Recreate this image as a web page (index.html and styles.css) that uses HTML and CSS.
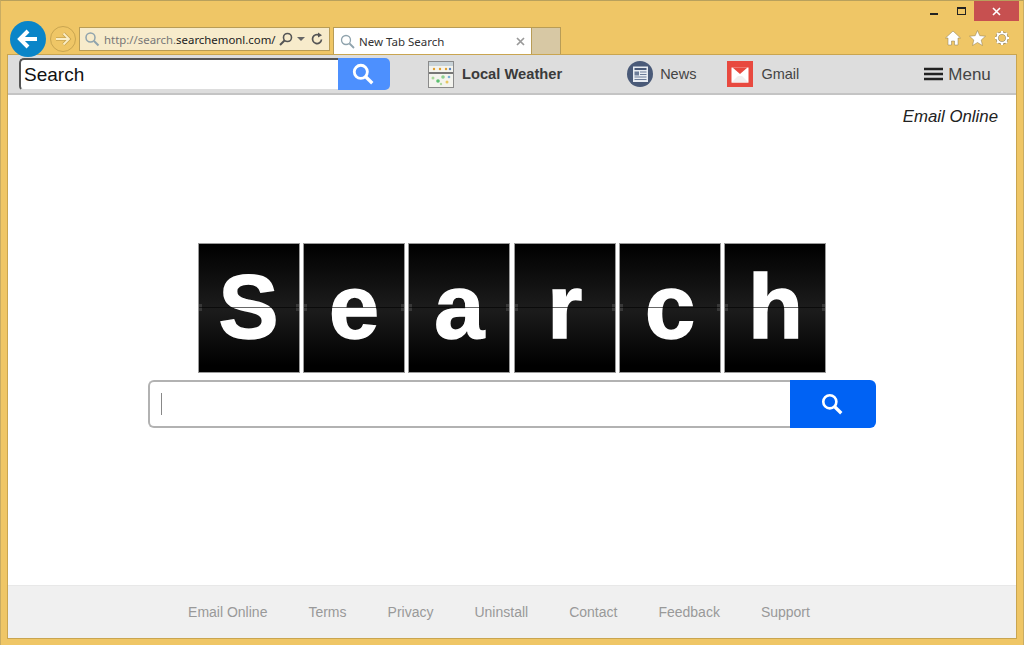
FILE: index.html
```html
<!DOCTYPE html>
<html lang="en">
<head>
  <meta charset="UTF-8">
  <meta name="viewport" content="width=device-width, initial-scale=1.0">
  <title>New Tab Search</title>
  <link rel="stylesheet" href="styles.css">
</head>
<body>
  <div class="window">
    <!-- Browser chrome -->
    <header class="chrome">
      <div class="back-btn">
        <svg width="24" height="24" viewBox="0 0 24 24"><path d="M21 12H4M12 4l-8 8 8 8" fill="none" stroke="#fff" stroke-width="4"/></svg>
      </div>
      <div class="forward-btn">
        <svg width="18" height="18" viewBox="0 0 18 18"><path d="M2 9h13M9.500 3.500L15 9l-5.500 5.500" fill="none" stroke="#c9a550" stroke-width="3.400"/><path d="M2 9h13M9.500 3.500L15 9l-5.500 5.500" fill="none" stroke="#fbeec6" stroke-width="1.800"/></svg>
      </div>
      <div class="address-bar">
        <svg width="16" height="16" viewBox="0 0 16 16"><circle cx="6.500" cy="6.500" r="4.500" fill="none" stroke="#8fa3ad" stroke-width="1.500"/><path d="M10 10l4.500 4.500" stroke="#8fa3ad" stroke-width="2"/></svg>
        <span class="url"><span class="url-dim">http://search.</span>searchemonl.com/</span>
        <svg width="14" height="14" viewBox="0 0 14 14"><circle cx="8.500" cy="5.500" r="4" fill="none" stroke="#555" stroke-width="1.600"/><path d="M5.500 8.500L1 13" stroke="#555" stroke-width="2"/></svg>
        <span class="caret"></span>
        <svg width="14" height="14" viewBox="0 0 14 14"><path d="M11.500 7.500A4.500 4.500 0 1 1 9.500 3.300" fill="none" stroke="#555" stroke-width="1.700"/><path d="M8 0.500l4 2.800-4 2.200z" fill="#555"/></svg>
      </div>
      <div class="tab">
        <svg width="15" height="15" viewBox="0 0 15 15"><circle cx="6" cy="6" r="4.500" fill="none" stroke="#8fa3ad" stroke-width="1.300"/><path d="M9.500 9.500l4.500 4.500" stroke="#8fa3ad" stroke-width="1.800"/></svg>
        <span class="tab-title">New Tab Search</span>
        <svg class="tab-close" width="9" height="9" viewBox="0 0 9 9"><path d="M1 1l7 7M8 1l-7 7" stroke="#999" stroke-width="1.700"/></svg>
      </div>
      <div class="new-tab"></div>

      <div class="chrome-right">
        <div class="caption">
          <span class="cap-min"></span>
          <span class="cap-max"></span>
          <span class="cap-close">
            <svg width="9" height="9" viewBox="0 0 9 9"><path d="M1 1l7 7M8 1l-7 7" stroke="#fff" stroke-width="1.600"/></svg>
          </span>
        </div>
        <div class="tools">
          <svg width="16" height="16" viewBox="0 0 16 16"><path d="M8 1L0.500 8H3v7h3.500v-4h3v4H13V8h2.500z" fill="#fff" stroke="#8a7a50" stroke-width="0.500"/></svg>
          <svg width="17" height="16" viewBox="0 0 17 16"><path d="M8.500 0.500l2.300 5.200 5.700 0.500-4.300 3.800 1.300 5.500-5-3-5 3 1.300-5.500L0.500 6.200l5.700-0.500z" fill="#fff" stroke="#8a7a50" stroke-width="0.500"/></svg>
          <svg width="16" height="16" viewBox="0 0 16 16"><circle cx="8" cy="8" r="4.800" fill="none" stroke="#8a7a50" stroke-width="3"/><path d="M8 1v2.500M8 12.500V15M1 8h2.500M12.500 8H15M3 3l1.800 1.800M11.200 11.200L13 13M13 3l-1.800 1.800M4.800 11.200L3 13" stroke="#8a7a50" stroke-width="2.600"/><circle cx="8" cy="8" r="4.800" fill="none" stroke="#fff" stroke-width="2"/><path d="M8 1v2.500M8 12.500V15M1 8h2.500M12.500 8H15M3 3l1.800 1.800M11.200 11.200L13 13M13 3l-1.800 1.800M4.800 11.200L3 13" stroke="#fff" stroke-width="2"/></svg>
        </div>
      </div>
    </header>

    <div class="viewport">
      <!-- Toolbar -->
      <nav class="toolbar">
        <form class="bar-search">
          <div class="bar-input">Search</div>
          <div class="bar-btn">
            <svg width="24" height="24" viewBox="0 0 22 22"><circle cx="9" cy="9" r="6" fill="none" stroke="#fff" stroke-width="2.600"/><path d="M13.500 13.500l6 6" stroke="#fff" stroke-width="3"/></svg>
          </div>
        </form>

        <a class="bar-link weather">
          <svg width="26" height="27" viewBox="0 0 26 27">
            <rect x="0.500" y="0.500" width="25" height="26" fill="#f4f4ee" stroke="#8a8a8a"/>
            <rect x="1" y="1" width="24" height="4" fill="#c9d3d8"/>
            <rect x="1" y="11" width="24" height="2" fill="#777"/>
            <circle cx="6" cy="8" r="1.200" fill="#e0a030"/><circle cx="12" cy="8" r="1.200" fill="#e0a030"/><circle cx="18" cy="8" r="1.200" fill="#e0a030"/><circle cx="22" cy="8" r="1.200" fill="#5a86c0"/>
            <circle cx="5" cy="17" r="1.500" fill="#a8d898"/><circle cx="10" cy="20" r="1.800" fill="#5cc070"/><circle cx="15" cy="16" r="1.800" fill="#8cd090"/><circle cx="19" cy="21" r="1.500" fill="#e8c860"/><circle cx="21" cy="16" r="1.300" fill="#7ab0d8"/><circle cx="13" cy="23" r="1.200" fill="#b0d8a0"/>
          </svg>
          <span>Local Weather</span>
        </a>
        <a class="bar-link news">
          <svg width="26" height="26" viewBox="0 0 26 26">
            <circle cx="13" cy="13" r="13" fill="#4a5a78"/>
            <rect x="6" y="5.500" width="15" height="15.500" fill="#e8ecf2"/>
            <rect x="7.500" y="7" width="12" height="2" fill="#4a5a78"/>
            <rect x="7.500" y="10.500" width="4.500" height="4" fill="#6c7c98"/>
            <path d="M13 11h6.500M13 13.500h6.500M7.500 16h12M7.500 18.500h12" stroke="#6c7c98"/>
          </svg>
          <span>News</span>
        </a>
        <a class="bar-link gmail">
          <svg width="26" height="26" viewBox="0 0 26 26">
            <rect width="26" height="26" fill="#e8493f"/>
            <rect x="4.500" y="6.500" width="17" height="15" fill="#fff"/>
            <path d="M5.500 6.500h15L13 13z" fill="#e8493f"/>
            <path d="M4.500 21.500l6.500-6.500h4l6.500 6.500z" fill="#f2eeee"/>
          </svg>
          <span>Gmail</span>
        </a>
        <a class="bar-link menu">
          <svg width="19" height="14" viewBox="0 0 19 14"><path d="M0 2h19M0 7h19M0 12h19" stroke="#222" stroke-width="2.400"/></svg>
          <span>Menu</span>
        </a>
      </nav>

      <main class="main">
        <div class="top-link">Email Online</div>

        <div class="logo">
          <div class="tile">S</div>
          <div class="tile">e</div>
          <div class="tile">a</div>
          <div class="tile">r</div>
          <div class="tile">c</div>
          <div class="tile">h</div>
        </div>

        <form class="search">
          <div class="search-input"><span class="cursor"></span></div>
          <div class="search-btn">
            <svg width="24" height="24" viewBox="0 0 22 22"><circle cx="9" cy="9" r="6" fill="none" stroke="#fff" stroke-width="2.400"/><path d="M13.500 13.500l6 6" stroke="#fff" stroke-width="3"/></svg>
          </div>
        </form>
      </main>

      <footer class="footer">
        <a>Email Online</a>
        <a>Terms</a>
        <a>Privacy</a>
        <a>Uninstall</a>
        <a>Contact</a>
        <a>Feedback</a>
        <a>Support</a>
      </footer>
    </div>
  </div>
</body>
</html>
```

FILE: styles.css
```css
/* General Styling */
html, body {
  margin: 0;
  height: 100%;
}

body {
  font-family: "Liberation Sans", Arial, sans-serif;
  overflow: hidden;
}

.window {
  width: 1024px;
  height: 645px;
  box-sizing: border-box;
  display: flex;
  flex-direction: column;
  background: #efc666;
  border: 1px solid #c9ac62;
  border-top-color: #b8a05c;
  border-bottom: none;
}

/* Browser chrome */
.chrome {
  height: 53px;
  flex: none;
  display: flex;
  align-items: flex-start;
  padding: 20px 4px 0 9px;
  box-sizing: border-box;
  position: relative;
  z-index: 1;
}

.back-btn {
  width: 36px;
  height: 36px;
  border-radius: 50%;
  background: #0a85c8;
  display: flex;
  justify-content: center;
  align-items: center;
  flex: none;
}

.forward-btn {
  width: 24px;
  height: 24px;
  margin: 5px 0 0 4px;
  border: 1px solid #c9a550;
  border-radius: 50%;
  display: flex;
  justify-content: center;
  align-items: center;
  flex: none;
}

.address-bar {
  width: 251px;
  height: 24px;
  margin: 6px 0 0 3px;
  box-sizing: border-box;
  border: 1px solid #b89c56;
  background: #f7ebcb;
  display: flex;
  align-items: center;
  padding: 0 4px;
  flex: none;
}

.url {
  margin: 0 4px;
  font-family: "Noto Sans", sans-serif;
  font-size: 11.400px;
  color: #222;
  white-space: nowrap;
  width: 171px;
  flex: none;
}

.url-dim {
  color: #777;
}

.caret {
  width: 0;
  height: 0;
  margin: 0 5px 0 4px;
  border-left: 4px solid transparent;
  border-right: 4px solid transparent;
  border-top: 4px solid #666;
}

.tab {
  width: 199px;
  height: 27px;
  margin: 6px 0 0 3px;
  box-sizing: border-box;
  background: #fff;
  border: 1px solid #b89c56;
  border-bottom: none;
  display: flex;
  align-items: center;
  padding: 0 6px 0 6px;
  flex: none;
}

.tab-title {
  margin-left: 4px;
  font-family: "Noto Sans", sans-serif;
  font-size: 11.500px;
  color: #333;
  flex: 1;
}

.new-tab {
  width: 29px;
  height: 27px;
  margin-top: 6px;
  box-sizing: border-box;
  background: #d7c8a4;
  border: 1px solid #b89c56;
  border-left: none;
  border-bottom: none;
  flex: none;
}

.chrome-right {
  margin: -20px 0 0 auto;
  display: flex;
  flex-direction: column;
  align-items: flex-end;
}

.caption {
  display: flex;
  align-items: center;
  height: 20px;
}

.cap-min {
  width: 8px;
  height: 2px;
  margin-top: 6px;
  background: #222;
}

.cap-max {
  width: 7px;
  height: 5px;
  margin-left: 19px;
  border: 1px solid #222;
  border-top-width: 2px;
}

.cap-close {
  width: 45px;
  height: 20px;
  margin-left: 8px;
  background: #c75050;
  display: flex;
  justify-content: center;
  align-items: center;
}

.tools {
  display: flex;
  gap: 8px;
  margin: 9px 9px 0 0;
}

/* Page area */
.viewport {
  flex: 1;
  margin: 0 6px 6px;
  display: flex;
  flex-direction: column;
  border: 1px solid #c9a550;
  background: #fff;
  min-height: 0;
}

.toolbar {
  height: 40px;
  flex: none;
  box-sizing: border-box;
  display: flex;
  align-items: center;
  background: #dddddd;
  border-bottom: 2px solid #c4c4c4;
  padding-left: 11px;
}

.bar-search {
  display: flex;
  margin: 0;
  width: 371px;
  flex: none;
}

.bar-input {
  width: 319px;
  height: 33px;
  box-sizing: border-box;
  background: #fff;
  border: 2px solid #555;
  border-right: none;
  border-bottom-color: #ddd;
  border-radius: 5px 0 0 5px;
  font-size: 19px;
  line-height: 29px;
  padding-left: 3px;
  color: #111;
}

.bar-btn {
  width: 52px;
  height: 32px;
  background: #4d90fe;
  border-radius: 0 5px 5px 0;
  display: flex;
  justify-content: center;
  align-items: center;
}

.bar-btn svg {
  margin-right: 3px;
}

.bar-link {
  display: flex;
  align-items: center;
  font-size: 14.500px;
  color: #444;
  flex: none;
}

.bar-link span {
  margin-bottom: 1px;
}

.weather {
  margin-left: 38px;
  gap: 8px;
  font-size: 14.700px;
  font-weight: bold;
  color: #3a3a3a;
}

.news {
  margin-left: 65px;
  gap: 7px;
}

.gmail {
  margin-left: 31px;
  gap: 8px;
}

.menu {
  margin-left: 125px;
  gap: 5px;
  font-size: 17px;
}

.menu span {
  margin: 1px 0 0;
}

.main {
  flex: 1;
  display: flex;
  flex-direction: column;
  align-items: center;
}

.top-link {
  align-self: flex-end;
  margin: 12px 18px 0 0;
  font-size: 16.800px;
  font-style: italic;
  color: #222;
}

.logo {
  display: flex;
  gap: 3.400px;
  margin-top: 116px;
}

.tile {
  width: 102px;
  height: 130px;
  box-sizing: border-box;
  border: 1px solid #9a9a9a;
  background: linear-gradient(#000 0%, #1c1c1c 50%, #1a1a1a 54%, #000 95%);
  color: #fff;
  font-size: 90px;
  font-weight: bold;
  line-height: 126px;
  text-align: center;
  -webkit-text-stroke: 1.500px #fff;
  position: relative;
}

/* hinge ticks on the tile edges */
.tile::before {
  content: "";
  position: absolute;
  left: 0;
  right: 0;
  top: 60px;
  height: 7px;
  background: linear-gradient(#383838, #383838) left / 3px 100% no-repeat,
    linear-gradient(#383838, #383838) right / 3px 100% no-repeat;
}

/* flip seam across the tile */
.tile::after {
  content: "";
  position: absolute;
  left: 0;
  right: 0;
  top: 63px;
  height: 1px;
  background: rgba(0, 0, 0, 0.6);
}

.search {
  display: flex;
  margin: 7px 0 0;
  width: 728px;
}

.search-input {
  flex: 1;
  height: 48px;
  box-sizing: border-box;
  border: 2px solid #b2b2b2;
  border-right: none;
  border-radius: 6px 0 0 6px;
  background: #fff;
  display: flex;
  align-items: center;
  padding-left: 11px;
}

.cursor {
  width: 1px;
  height: 22px;
  background: #888;
}

.search-btn {
  width: 86px;
  height: 48px;
  background: #0062f4;
  border-radius: 0 6px 6px 0;
  display: flex;
  justify-content: center;
  align-items: center;
}

.search-btn svg {
  margin-right: 3px;
}

.footer {
  height: 53px;
  flex: none;
  box-sizing: border-box;
  display: flex;
  justify-content: center;
  align-items: center;
  gap: 41px;
  padding-right: 26px;
  background: #f0f0f0;
  border-top: 1px solid #e8e8e8;
  font-size: 14px;
  color: #999;
}
```
